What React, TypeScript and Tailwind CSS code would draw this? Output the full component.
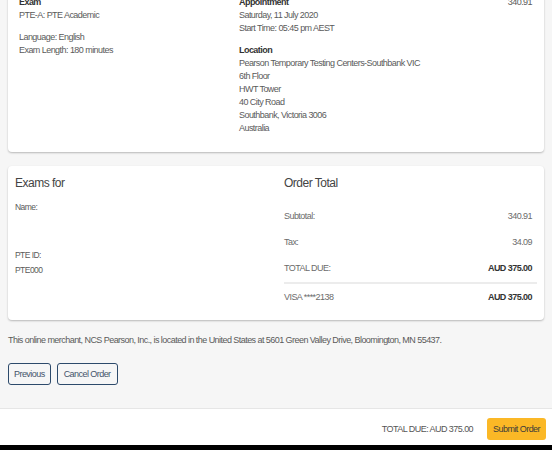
import React from "react";

const font = { fontFamily: '"Liberation Sans", Arial, sans-serif' };

function Row({ label, value, bold }: { label: string; value: string; bold?: boolean }) {
  return (
    <div className="flex h-[26px] items-center justify-between pr-[5px]">
      <span className="text-[#6b6b6b]">{label}</span>
      <span className={bold ? "font-bold text-[#333]" : "text-[#6b6b6b]"}>{value}</span>
    </div>
  );
}

export default function App() {
  return (
    <div
      style={font}
      className="flex h-[450px] w-full flex-col overflow-hidden bg-[#f6f6f6] text-[9px] leading-[13px] tracking-[-0.55px] text-[#5a5a5a]"
    >
      {/* Exam / appointment card */}
      <div className="mx-[8px] -mt-[12px] flex rounded-sm bg-white pb-[17px] pl-[11px] pr-[12px] pt-[8px] shadow-[0_1px_2px_rgba(0,0,0,0.25)]">
        <div className="w-[220px]">
          <div className="font-bold text-[#333]">Exam</div>
          <div>PTE-A: PTE Academic</div>
          <div className="mt-[9px]">Language: English</div>
          <div>Exam Length: 180 minutes</div>
        </div>
        <div className="flex-1">
          <div className="font-bold text-[#333]">Appointment</div>
          <div>Saturday, 11 July 2020</div>
          <div>Start Time: 05:45 pm AEST</div>
          <div className="mt-[9px] font-bold text-[#333]">Location</div>
          <div>Pearson Temporary Testing Centers-Southbank VIC</div>
          <div>6th Floor</div>
          <div>HWT Tower</div>
          <div>40 City Road</div>
          <div>Southbank, Victoria 3006</div>
          <div>Australia</div>
        </div>
        <div className="text-right">340.91</div>
      </div>

      {/* Exams for / order total card */}
      <div className="mx-[8px] mt-[14px] flex h-[154px] rounded-sm bg-white pl-[7px] pr-[7px] pt-[9px] shadow-[0_1px_2px_rgba(0,0,0,0.25)]">
        <div className="w-[269px] text-[8.5px]">
          <div className="text-[12px] leading-[16px] tracking-[-0.5px] text-[#444]">Exams for</div>
          <div className="mt-[10px]">Name:</div>
          <div className="mt-[35px]">PTE ID:</div>
          <div className="mt-[2px]">PTE000</div>
        </div>
        <div className="flex-1">
          <div className="text-[12px] leading-[16px] tracking-[-0.5px] text-[#444]">Order Total</div>
          <div className="mt-[12px]">
            <Row label="Subtotal:" value="340.91" />
            <Row label="Tax:" value="34.09" />
            <Row label="TOTAL DUE:" value="AUD 375.00" bold />
            <div className="mt-[1px] h-[2px] bg-[#ececec]" />
            <Row label="VISA ****2138" value="AUD 375.00" bold />
          </div>
        </div>
      </div>

      <p className="ml-[8px] mt-[14px]">
        This online merchant, NCS Pearson, Inc., is located in the United States at 5601 Green Valley Drive, Bloomington, MN 55437.
      </p>

      <div className="ml-[8px] mt-[16px] flex gap-[6px]">
        <button className="h-[22px] rounded-[3px] border-[1.5px] border-[#2d4a6b] px-[5px] text-[#44546a]">
          Previous
        </button>
        <button className="h-[22px] rounded-[3px] border-[1.5px] border-[#2d4a6b] px-[6px] text-[#44546a]">
          Cancel Order
        </button>
      </div>

      <div className="flex-1" />

      {/* footer bar */}
      <div className="flex h-[37px] items-center justify-end gap-[14px] border-t border-[#e6e6e6] bg-white pr-[6px] pt-[4px]">
        <span className="text-[#555]">TOTAL DUE: AUD 375.00</span>
        <button className="h-[22px] rounded-[3px] bg-[#fbb826] px-[6px] text-[#3b3b3b]">Submit Order</button>
      </div>
      <div className="h-[5px] bg-black" />
    </div>
  );
}
